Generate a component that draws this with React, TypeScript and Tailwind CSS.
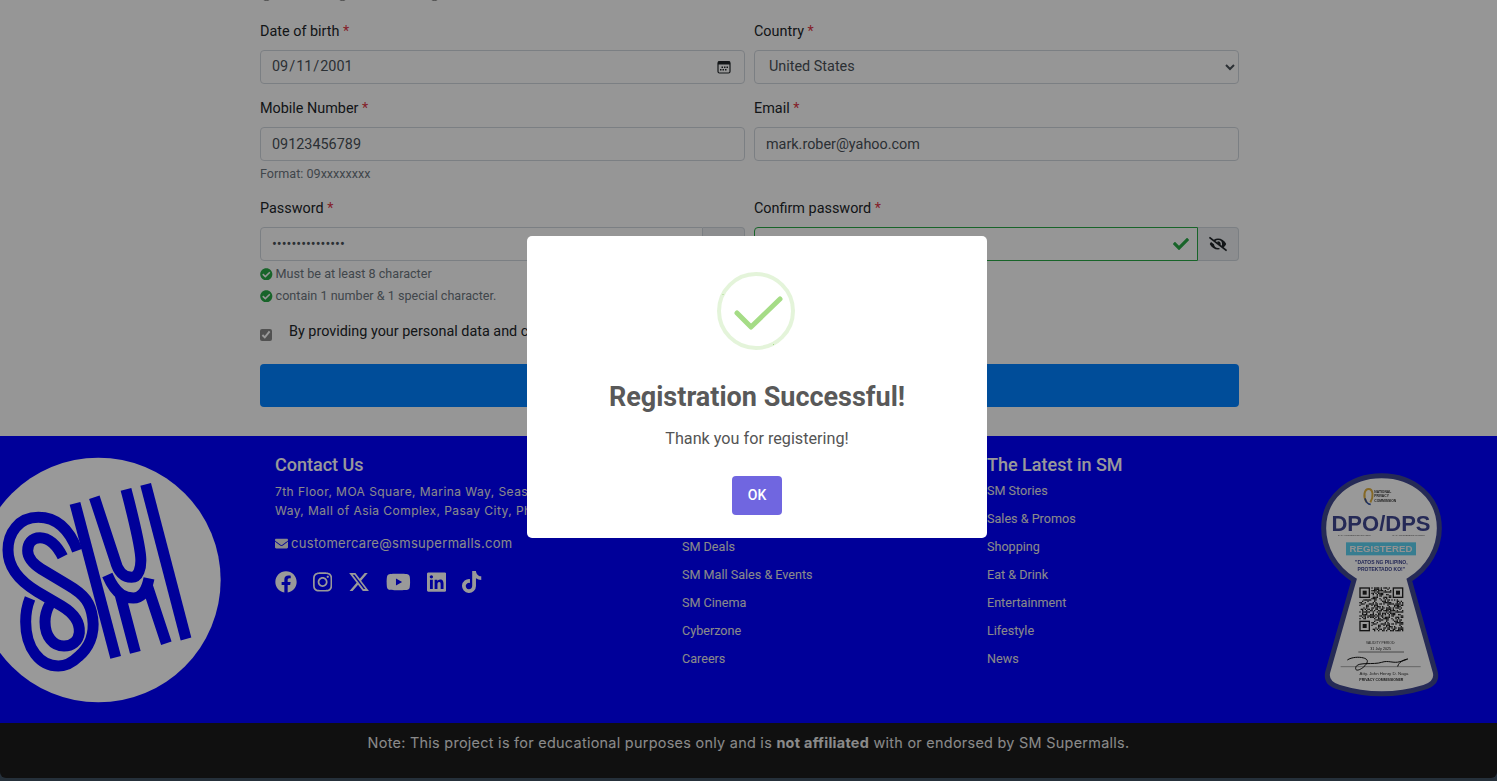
import React from "react";
import { FaFacebook, FaInstagram, FaYoutube, FaLinkedin, FaTiktok, FaEnvelope, FaEyeSlash, FaCheck, FaCheckCircle } from "react-icons/fa";
import { FaXTwitter } from "react-icons/fa6";

function Label({ children }: { children: React.ReactNode }) {
  return (
    <label className="block text-[14.4px] leading-[21px] mb-2 text-[#212529]">
      {children} <span className="text-[#dc3545]">*</span>
    </label>
  );
}

const inputBase = "block w-full h-[34px] text-[14.4px] text-[#495057] bg-[#fbfbfb] border rounded-[4px] outline-none";
const inputCls = inputBase + " px-[11px] border-[#ced4da]";

function SmLogo() {
  return (
    <svg width="240" height="280" viewBox="0 0 720 840" className="block">
      <circle cx="295" cy="420" r="367" fill="#ffffff" />
      <g fill="none" stroke="#0000ff" strokeWidth="33">
        <path d="M225 190 L347 652" />
        <path d="M283 172 L345 360 C355 400 375 412 395 412 C415 412 425 385 422 350 C418 300 395 215 378 148" />
        <path d="M437 133 L558 597" />
        <path d="M406 637 L358 455 M322 405 C350 470 380 474 400 474 C425 474 440 450 447 415 M443 440 L499 610" />
        <path d="M232 332 C205 260 165 232 115 232 C55 232 24 280 24 330 C24 390 70 430 112 455 L185 498 C225 522 240 550 238 578 C235 605 215 618 192 618 C160 618 135 590 135 545 C135 525 140 510 148 495" />
        <path d="M188 350 C170 315 145 293 120 293 C95 293 83 312 83 332 C83 358 105 375 125 388 L205 436 C255 465 272 490 278 535 C285 585 265 625 235 650 C215 670 195 678 175 678 C120 678 77 625 77 545 C77 520 82 495 90 475" />
      </g>
    </svg>
  );
}

function BadgeQr() {
  const cells: React.ReactNode[] = [];
  const n = 33;
  const s = 4;
  const inFinder = (x: number, y: number) => (x < 9 && y < 9) || (x > 23 && y < 9) || (x < 9 && y > 23);
  let seed = 17;
  for (let y = 0; y < n; y++) {
    for (let x = 0; x < n; x++) {
      seed = (seed * 137 + 71) % 1009;
      if (!inFinder(x, y) && seed % 2 === 0) {
        cells.push(<rect key={x + "-" + y} x={148 + x * s} y={367 + y * s} width={s} height={s} fill="#222222" />);
      }
    }
  }
  const finder = (x: number, y: number) => (
    <g key={x + "f" + y}>
      <rect x={x} y={y} width="32" height="32" fill="#222222" />
      <rect x={x + 4} y={y + 4} width="24" height="24" fill="#fff" />
      <rect x={x + 10} y={y + 10} width="12" height="12" fill="#222222" />
    </g>
  );
  return (
    <g>
      {cells}
      {finder(148, 367)}
      {finder(248, 367)}
      {finder(148, 467)}
    </g>
  );
}

function Badge() {
  return (
    <svg width="145" height="240" viewBox="0 0 435 720" className="block blur-[0.7px]">
      <path
        d="M132 345 C75 310 41 250 41 190 C41 95 120 32 215 32 C310 32 388 95 388 190 C388 250 355 310 298 345 L376 622 C381 645 368 660 342 667 C260 692 170 692 88 667 C62 660 48 645 53 622 Z"
        fill="#ffffff"
        stroke="#3f4690"
        strokeWidth="15"
      />
      <path d="M170 112 C158 95 163 72 176 72 C189 72 192 95 181 112" fill="none" stroke="#e0b040" strokeWidth="6" />
      <path d="M165 100 C168 112 175 118 182 118" fill="none" stroke="#3050a0" strokeWidth="5" />
      <g fontFamily="Liberation Sans, sans-serif" textAnchor="middle">
        <g textAnchor="start" fontSize="10" fontWeight="700" fill="#333">
          <text x="193" y="83">NATIONAL</text>
          <text x="193" y="96">PRIVACY</text>
          <text x="193" y="110">COMMISSION</text>
        </g>
        <text x="213" y="197" fontSize="66" fontWeight="700" fill="#3f4690">DPO/DPS</text>
        <text x="133" y="212" fontSize="7" fill="#555">DATA PROTECTION OFFICER</text>
        <text x="296" y="212" fontSize="7" fill="#555">DATA PROCESSING SYSTEM</text>
        <rect x="108" y="232" width="210" height="39" fill="#5cd0f0" />
        <text x="213" y="261" fontSize="29" fontWeight="700" fill="#f4f4f4">REGISTERED</text>
        <text x="214" y="297" fontSize="15" fontWeight="700" fill="#3f4690">"DATOS NG PILIPINO,</text>
        <text x="214" y="317" fontSize="15" fontWeight="700" fill="#3f4690">PROTEKTADO KO!"</text>
        <text x="212" y="537" fontSize="10" fill="#333">VALIDITY PERIOD:</text>
        <text x="212" y="555" fontSize="11" fill="#222">31 July 2025</text>
        <text x="222" y="630" fontSize="13" fill="#333">Atty. John Henry D. Naga</text>
        <text x="214" y="647" fontSize="10.5" fontWeight="700" fill="#333">PRIVACY COMMISSIONER</text>
      </g>
      <line x1="145" y1="561" x2="282" y2="561" stroke="#333" strokeWidth="2" />
      <line x1="92" y1="605" x2="332" y2="605" stroke="#555" strokeWidth="1.5" />
      <path d="M112 585 C130 572 175 575 172 590 C168 608 130 628 138 605 C145 590 190 600 215 592 C235 585 250 596 270 590 C285 586 305 578 285 584 C265 590 260 610 265 602" fill="none" stroke="#111" strokeWidth="3" />
      <BadgeQr />
    </svg>
  );
}

function LinkList({ items }: { items: string[] }) {
  return (
    <ul>
      {items.map((t) => (
        <li key={t} className="h-[28px] leading-[28px] text-[12.6px] text-[#e6e6e6]">{t}</li>
      ))}
    </ul>
  );
}

function Heading({ children }: { children: React.ReactNode }) {
  return <h3 className="text-[18px] leading-[24px] font-medium text-white">{children}</h3>;
}

export default function App() {
  return (
    <div className="relative h-[781px] overflow-hidden bg-[#3e5061] font-[Roboto,sans-serif]">
      <main className="bg-[#fbfbfb] h-[436px] overflow-hidden">
        <div className="ml-[260px] w-[979px]">
          <div className="flex h-[13px] -mt-[12px] gap-[63px]">
            <input type="radio" className="w-[13px] h-[13px] m-0" />
            <input type="radio" className="w-[13px] h-[13px] m-0" />
            <input type="radio" className="w-[13px] h-[13px] m-0 ml-[16px]" />
          </div>
          <div className="grid grid-cols-2 gap-x-[9px] mt-[20px]">
            <div className="mb-[14px]">
              <Label>Date of birth</Label>
              <div className="relative">
                <input type="date" defaultValue="2001-09-11" className={inputBase + " pl-[10px] pr-[11px] border-[#ced4da] [&::-webkit-calendar-picker-indicator]:opacity-0"} />
                <svg width="14" height="14" viewBox="0 0 14 14" className="absolute right-[14px] top-[10px]">
                  <rect x="1" y="1.5" width="12" height="11.5" rx="1.5" fill="none" stroke="#212529" strokeWidth="1.2" />
                  <rect x="1" y="1.5" width="12" height="3" fill="#212529" />
                  <rect x="4.5" y="6.5" width="1.5" height="1.5" fill="#212529" />
                  <rect x="7" y="6.5" width="1.5" height="1.5" fill="#212529" />
                  <rect x="9.5" y="6.5" width="1.5" height="1.5" fill="#212529" />
                  <rect x="3" y="9" width="1.5" height="1.5" fill="#212529" />
                  <rect x="5.5" y="9" width="1.5" height="1.5" fill="#212529" />
                  <rect x="8" y="9" width="1.5" height="1.5" fill="#212529" />
                </svg>
              </div>
            </div>
            <div className="mb-[14px]">
              <Label>Country</Label>
              <select defaultValue="United States" className={inputBase + " pl-[10px] pr-[11px] pb-[2px] border-[#ced4da]"}>
                <option>United States</option>
                <option>Philippines</option>
              </select>
            </div>
            <div className="mb-[15px]">
              <Label>Mobile Number</Label>
              <input type="text" defaultValue="09123456789" className={inputCls} />
              <p className="text-[12.6px] leading-[18px] mt-[4px] text-[#6c757d]">Format: 09xxxxxxxx</p>
            </div>
            <div>
              <Label>Email</Label>
              <input type="email" defaultValue="mark.rober@yahoo.com" className={inputCls} />
            </div>
            <div>
              <Label>Password</Label>
              <div className="flex">
                <input type="password" defaultValue="Password@123456" className={inputCls + " rounded-r-none"} />
                <div className="w-[42px] h-[34px] shrink-0 flex items-center justify-center bg-[#e9ecef] border border-l-0 border-[#ced4da] rounded-r-[4px]">
                  <FaEyeSlash className="text-[18px] text-[#212529]" />
                </div>
              </div>
              <div className="text-[12.6px] leading-[22px] text-[#6c757d] mt-[2px]">
                <div className="flex items-center gap-[3px]">
                  <FaCheckCircle className="text-[12.6px] text-[#28a745]" /> Must be at least 8 character
                </div>
                <div className="flex items-center gap-[3px]">
                  <FaCheckCircle className="text-[12.6px] text-[#28a745]" /> contain 1 number &amp; 1 special character.
                </div>
              </div>
            </div>
            <div>
              <Label>Confirm password</Label>
              <div className="flex">
                <div className="relative grow">
                  <input type="text" className={inputBase + " px-[11px] rounded-r-none border-[#28a745]"} />
                  <FaCheck className="absolute right-[9px] top-[9px] text-[16px] text-[#28a745]" />
                </div>
                <div className="w-[41px] h-[34px] shrink-0 flex items-center justify-center bg-[#e9ecef] border border-l-0 border-[#ced4da] rounded-r-[4px]">
                  <FaEyeSlash className="text-[18px] text-[#212529]" />
                </div>
              </div>
            </div>
          </div>
          <div className="flex items-start mt-[14px] h-[43px] text-[14.4px] leading-[21px] text-[#212529]">
            <input type="checkbox" defaultChecked className="w-[12px] h-[12px] m-0 mt-[8px] mr-[17px] accent-[#888888]" />
            <span>By providing your personal data and consent to our privacy policy.</span>
          </div>
          <button className="block w-full h-[43px] rounded-[4px] bg-[#0080ff] text-white text-[16px]">Register</button>
        </div>
      </main>

      <footer className="h-[287px] bg-[#0000ff] flex overflow-hidden">
        <div className="w-[275px] shrink-0 pt-[4px]">
          <SmLogo />
        </div>
        <div className="w-[407px] shrink-0 pt-[17px] text-[#e6e6e6]">
          <Heading>Contact Us</Heading>
          <p className="font-[Inter,sans-serif] whitespace-nowrap text-[12px] leading-[19px] mt-[5px] tracking-[0.45px]">
            7th Floor, MOA Square, Marina Way, Seaside Boulevard corner Coral
            <br />
            Way, Mall of Asia Complex, Pasay City, Philippines
          </p>
          <p className="font-[Inter,sans-serif] flex items-center gap-[3px] text-[13px] leading-[20px] mt-[13px] tracking-[0.3px]">
            <FaEnvelope className="text-[13px]" /> customercare@smsupermalls.com
          </p>
          <div className="flex items-center gap-[16px] mt-[18px] text-white">
            <FaFacebook className="w-[22px] h-[22px]" />
            <FaInstagram className="w-[19.25px] h-[22px]" />
            <FaXTwitter className="w-[22px] h-[22px]" />
            <FaYoutube className="w-[24.75px] h-[22px]" />
            <FaLinkedin className="w-[19.25px] h-[22px]" />
            <FaTiktok className="w-[19.25px] h-[22px]" />
          </div>
        </div>
        <div className="w-[305px] shrink-0 pt-[17px]">
          <Heading>Mall Services</Heading>
          <LinkList items={["SM Supermalls", "Mall Directory", "SM Deals", "SM Mall Sales & Events", "SM Cinema", "Cyberzone", "Careers"]} />
        </div>
        <div className="w-[333px] shrink-0 pt-[17px]">
          <Heading>The Latest in SM</Heading>
          <LinkList items={["SM Stories", "Sales & Promos", "Shopping", "Eat & Drink", "Entertainment", "Lifestyle", "News"]} />
        </div>
        <div className="pt-[29px] -ml-[10px]">
          <Badge />
        </div>
      </footer>

      <div className="h-[55px] bg-[#1b1b1b] rounded-b-[6px] text-center pt-[9px] font-[Inter,sans-serif] text-[14.4px] tracking-[0.29px] leading-[21px] text-[#e6e6e6]">
        Note: This project is for educational purposes only and is <strong className="font-bold">not affiliated</strong> with or endorsed by SM Supermalls.
      </div>

      <div className="fixed inset-0 bg-black/40 flex items-center justify-center">
        <div className="ml-[17px] mb-[7px] w-[460px] h-[302px] bg-white rounded-[5px] flex flex-col items-center pt-[36px]">
          <svg width="78" height="78" viewBox="0 0 78 78" className="block mr-[2px]">
            <circle cx="39" cy="39" r="37" fill="none" stroke="#a5dc86" strokeOpacity="0.3" strokeWidth="4" />
            <path d="M20 41 L34 55 L63 27" fill="none" stroke="#a5dc86" strokeWidth="5" strokeLinecap="round" strokeLinejoin="round" />
            <path d="M5.5 22 L6.5 23 M56 72 L57 73" stroke="#a5dc86" strokeWidth="1" />
          </svg>
          <h2 className="mt-[27px] text-[27px] leading-[40px] font-bold text-[#595959]">Registration Successful!</h2>
          <p className="mt-[11px] text-[16.2px] leading-[22px] text-[#545454]">Thank you for registering!</p>
          <button className="mt-[26px] w-[50px] h-[39px] rounded-[4px] bg-[#7066e0] text-white text-[14px] font-medium">OK</button>
        </div>
      </div>
    </div>
  );
}
